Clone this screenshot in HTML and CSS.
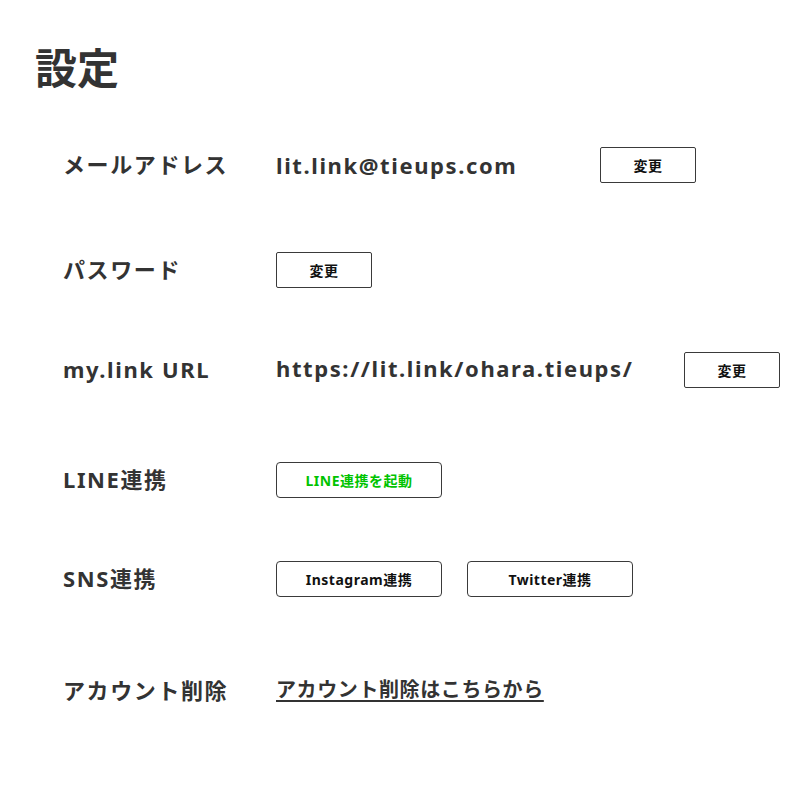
FILE: index.html
```html
<!DOCTYPE html>
<html lang="ja">
<head>
<meta charset="utf-8">
<title>設定</title>
<link rel="stylesheet" href="styles.css">
</head>
<body>
<main class="page">
  <h1 class="title">設定</h1>
  <section class="settings">
    <div class="row row-mail">
      <div class="label">メールアドレス</div>
      <div class="value value-mail">lit.link@tieups.com</div>
      <button class="btn btn-small">変更</button>
    </div>
    <div class="row row-pass">
      <div class="label">パスワード</div>
      <button class="btn btn-small">変更</button>
    </div>
    <div class="row row-url">
      <div class="label">my.link URL</div>
      <div class="value value-url">https://lit.link/ohara.tieups/</div>
      <button class="btn btn-small">変更</button>
    </div>
    <div class="row row-line">
      <div class="label">LINE連携</div>
      <button class="btn btn-wide btn-line">LINE連携を起動</button>
    </div>
    <div class="row row-sns">
      <div class="label">SNS連携</div>
      <div class="btn-group">
        <button class="btn btn-wide">Instagram連携</button>
        <button class="btn btn-wide">Twitter連携</button>
      </div>
    </div>
    <div class="row row-delete">
      <div class="label">アカウント削除</div>
      <a class="link" href="#">アカウント削除はこちらから</a>
    </div>
  </section>
</main>
</body>
</html>
```

FILE: styles.css
```css
html, body {
  margin: 0;
  padding: 0;
  background: #fff;
}

body {
  font-family: "Noto Sans", "Noto Sans CJK JP", sans-serif;
  color: #333;
}

.page {
  padding: 40px 0 0 35px;
}

.title {
  margin: 0;
  font-size: 42px;
  line-height: 56px;
  font-weight: 700;
  letter-spacing: 0;
}

.settings {
  padding-left: 28px;
  margin-top: 51px;
  display: flex;
  flex-direction: column;
}

.row {
  display: flex;
  align-items: center;
  height: 36px;
}

.row-mail { margin-bottom: 69px; }
.row-pass { margin-bottom: 64px; }
.row-url { margin-bottom: 74px; }
.row-line { margin-bottom: 63px; }
.row-sns { margin-bottom: 76px; }

.label {
  width: 213px;
  flex: none;
  font-size: 22px;
  font-weight: 700;
  letter-spacing: 1.6px;
  line-height: 30px;
  margin-top: -2px;
}

.value {
  font-size: 22px;
  font-weight: 700;
  letter-spacing: 1.6px;
  line-height: 30px;
}

.value-mail { width: 324px; }
.value-url { width: 408px; margin-top: -5px; }

.btn {
  font-family: "Noto Sans", "Noto Sans CJK JP", sans-serif;
  height: 36px;
  padding: 0;
  background: #fff;
  border: 1.5px solid #3a3a3a;
  color: #111;
  font-size: 14px;
  font-weight: 700;
  letter-spacing: 0.5px;
  cursor: pointer;
  box-sizing: border-box;
}

.btn-small {
  width: 96px;
  border-radius: 2px;
}

.btn-wide {
  width: 166px;
  border-radius: 4px;
}

.btn-line {
  color: #00c300;
}

.btn-group {
  display: flex;
  gap: 25px;
}

.link {
  color: #333;
  font-size: 20px;
  font-weight: 700;
  letter-spacing: 0.6px;
  text-decoration: underline;
  text-underline-offset: 3px;
  text-decoration-thickness: 1.5px;
  margin-top: -5px;
}
```
